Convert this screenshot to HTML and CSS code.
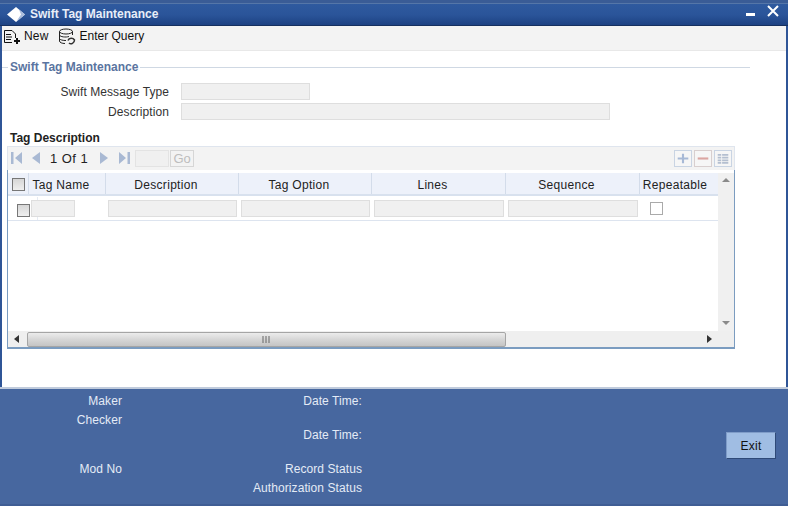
FILE: index.html
```html
<!DOCTYPE html>
<html lang="en">
<head>
<meta charset="utf-8">
<title>Swift Tag Maintenance</title>
<link rel="stylesheet" href="styles.css">
</head>
<body>
<div class="window">
  <header class="titlebar">
    <svg class="logo" width="18" height="15" viewBox="0 0 18 15"><path d="M9 0 L18 7.500 L9 15 L0 7.500 Z" fill="#fff"/><path d="M12 2.500 L18 7.500 L9 15 L14 7.500 Z" fill="#a9bcdc"/></svg>
    <span class="title">Swift Tag Maintenance</span>
    <span class="winbtns">
      <svg width="10" height="5" viewBox="0 0 10 5"><rect y="1" width="9" height="3" fill="#fff"/></svg>
      <svg class="closebtn" width="12" height="12" viewBox="0 0 12 12"><path d="M1 1 L11 11 M11 1 L1 11" stroke="#fff" stroke-width="2"/></svg>
    </span>
  </header>
  <nav class="toolbar">
    <span class="tool">
      <svg width="18" height="17" viewBox="0 0 18 17" fill="none" stroke="#111"><path d="M1.500 14.500V2.500H9L12.500 6V10M1.500 14.500H9"/><path d="M3 6.500H8M3 9H9M3 11.500H8"/><path d="M14 10V16M11 13H17" stroke-width="2"/></svg>
      New
    </span>
    <span class="tool tool-query">
      <svg width="18" height="18" viewBox="0 0 18 18" fill="none" stroke="#222"><ellipse cx="8" cy="3.500" rx="6.500" ry="2.500"/><path d="M1.500 3.500V13C1.500 14.500 4 15.500 7 15.500M14.500 3.500V7M1.500 7C2 9 8 9.500 11 8.500M1.500 10.500C2 12 5 12.500 8 12.500"/><path d="M10 12.500C11 9.500 15 9.500 16.500 12C16.500 15 13 17 11 15" stroke="#333" stroke-width="1.500"/></svg>
      Enter Query
    </span>
  </nav>
  <main class="form">
    <div class="legend"><span class="legend-text">Swift Tag Maintenance</span></div>
    <div class="field">
      <label class="field-label">Swift Message Type</label>
      <span class="input input-short"></span>
    </div>
    <div class="field">
      <label class="field-label">Description</label>
      <span class="input input-long"></span>
    </div>
    <h2 class="section">Tag Description</h2>
    <div class="pager">
      <svg class="pg first" width="11" height="12" viewBox="0 0 11 12"><path d="M0 0H2.500V12H0Z M11 0V12L4 6Z" fill="#a9b9d3"/></svg>
      <svg class="pg prev" width="8" height="12" viewBox="0 0 8 12"><path d="M8 0V12L0 6Z" fill="#a9b9d3"/></svg>
      <span class="pg-text">1 Of 1</span>
      <svg class="pg next" width="8" height="12" viewBox="0 0 8 12"><path d="M0 0V12L8 6Z" fill="#a9b9d3"/></svg>
      <svg class="pg last" width="11" height="12" viewBox="0 0 11 12"><path d="M11 0H8.500V12H11Z M0 0V12L7 6Z" fill="#a9b9d3"/></svg>
      <span class="pg-input"></span>
      <span class="pg-go">Go</span>
      <span class="pg-actions">
        <svg class="act act-add" width="18" height="17" viewBox="0 0 18 17"><path d="M9 3V14M3 8.500H15" stroke="#a7b9d6" stroke-width="2.400"/></svg>
        <svg class="act act-del" width="18" height="17" viewBox="0 0 18 17"><path d="M3 8.500H15" stroke="#dba6a2" stroke-width="2.400"/></svg>
        <svg class="act act-list" width="18" height="17" viewBox="0 0 18 17"><path d="M3 4.500H7M8 4.500H15M3 7.500H7M8 7.500H15M3 10.500H7M8 10.500H15M3 13.500H7M8 13.500H15" stroke="#b4bfd0" stroke-width="2"/></svg>
      </span>
    </div>
    <div class="grid">
      <div class="grid-body">
        <div class="grid-main">
          <div class="grid-head">
            <span class="cell c0"><span class="check check-grey"></span></span>
            <span class="cell c1">Tag Name</span>
            <span class="cell c2">Description</span>
            <span class="cell c3">Tag Option</span>
            <span class="cell c4">Lines</span>
            <span class="cell c5">Sequence</span>
            <span class="cell c6">Repeatable</span>
          </div>
          <div class="grid-row">
            <span class="rcell r0"><span class="check check-grey"></span></span>
            <span class="rcell r1"><span class="input rinput-small"></span></span>
            <span class="rcell c2"><span class="input rinput"></span></span>
            <span class="rcell c3"><span class="input rinput"></span></span>
            <span class="rcell c4"><span class="input rinput"></span></span>
            <span class="rcell c5"><span class="input rinput"></span></span>
            <span class="rcell r6"><span class="check check-white"></span></span>
          </div>
        </div>
        <div class="vscroll">
          <svg width="8" height="4" viewBox="0 0 8 4"><path d="M4 0L8 4H0Z" fill="#8a8a8a"/></svg>
          <svg width="8" height="4" viewBox="0 0 8 4"><path d="M4 4L8 0H0Z" fill="#8a8a8a"/></svg>
        </div>
      </div>
      <div class="hscroll">
        <svg class="arrow" width="5" height="8" viewBox="0 0 5 8"><path d="M0 4L5 0V8Z" fill="#333"/></svg>
        <div class="track">
          <div class="thumb"><svg width="9" height="7" viewBox="0 0 9 7"><path d="M1 0V7M4 0V7M7 0V7" stroke="#666" stroke-width="1"/></svg></div>
        </div>
        <svg class="arrow" width="5" height="8" viewBox="0 0 5 8"><path d="M5 4L0 0V8Z" fill="#333"/></svg>
      </div>
    </div>
  </main>
  <footer class="footer">
    <div class="foot-col foot-left">
      <span class="foot-label">Maker</span>
      <span class="foot-label">Checker</span>
      <span class="foot-label foot-mod">Mod No</span>
    </div>
    <div class="foot-col foot-right">
      <span class="foot-label">Date Time:</span>
      <span class="foot-label foot-dt2">Date Time:</span>
      <span class="foot-label foot-rs">Record Status</span>
      <span class="foot-label">Authorization Status</span>
    </div>
    <button class="exit" type="button">Exit</button>
  </footer>
</div>
</body>
</html>
```
FILE: styles.css
```css
* { box-sizing: border-box; }
html, body { margin: 0; padding: 0; }
body {
  width: 788px;
  height: 506px;
  overflow: hidden;
  font-family: "Liberation Sans", Arial, sans-serif;
  font-size: 12px;
  color: #222;
  background: #fff;
}
.window {
  width: 788px;
  height: 506px;
  display: flex;
  flex-direction: column;
  border-left: 2px solid #2f5597;
  border-right: 2px solid #2f5597;
}
.titlebar {
  height: 26px;
  margin: 0 -2px;
  padding: 0 9px 0 7px;
  flex: none;
  display: flex;
  align-items: center;
  color: #fff;
  background: linear-gradient(#5576a8 0, #5576a8 1px, #2f5a9f 1px, #2a5499 55%, #1d4283 100%);
  border-top: 3px solid #3a5c96;
  border-bottom: 1px solid #16305f;
}
.logo { flex: none; }
.title {
  margin-left: 5px;
  font-weight: bold;
  font-size: 12px;
  color: #e8eef8;
}
.winbtns { margin-left: auto; display: flex; align-items: center; gap: 11px; }
.closebtn { position: relative; top: -3px; }
.toolbar {
  height: 25px;
  flex: none;
  display: flex;
  align-items: flex-start;
  padding: 2px 0 0 1px;
  background: #f3f3f3;
  border-bottom: 1px solid #e8e8e8;
  color: #111;
  line-height: 16px;
}
.tool { display: flex; align-items: flex-start; gap: 3px; letter-spacing: .15px; }
.tool-query { margin-left: 10px; letter-spacing: 0; }
.form { flex: 1; padding: 0; background: #fff; min-height: 0; }
.legend {
  display: flex;
  align-items: center;
  height: 18px;
  margin-top: 7px;
  width: 748px;
}
.legend::before { content: ""; width: 6px; height: 1px; background: #cfd8e3; }
.legend::after { content: ""; flex: 1; height: 1px; background: #cfd8e3; }
.legend-text { padding: 0 2px; font-weight: bold; color: #5a74a0; }
.field { display: flex; align-items: center; height: 20px; }
.legend + .field { margin-top: 6px; }
.field-label { width: 167px; text-align: right; color: #333; letter-spacing: .08px; }
.input { display: block; height: 17px; background: #f0f0f0; border: 1px solid #dedede; }
.input-short { width: 129px; margin: 0 0 2px 12px; }
.input-long { width: 429px; margin: 0 0 2px 12px; }
.section {
  margin: 9px 0 0 8px;
  font-size: 12px;
  line-height: 15px;
  font-weight: bold;
  color: #222;
}
.pager {
  width: 728px;
  height: 24px;
  margin: 0 0 0 5px;
  display: flex;
  align-items: center;
  background: #f3f3f3;
  border: 1px solid #dfe5ee;
  border-bottom: 0;
  padding: 0 2px 1px 3px;
}
.pg { flex: none; }
.prev { margin-left: 10px; }
.pg-text { margin-left: 10px; color: #222; font-size: 13px; letter-spacing: .45px; }
.next { margin-left: 12px; }
.last { margin-left: 11px; }
.pg-input { width: 34px; height: 17px; margin-left: 5px; background: #f0f0f0; border: 1px solid #e3e3e3; }
.pg-go {
  width: 24px;
  height: 17px;
  margin-left: 1px;
  border: 1px solid #d6d6d6;
  color: #bdbdbd;
  text-align: center;
  font-size: 13px;
  line-height: 15px;
}
.pg-actions { margin-left: auto; display: flex; gap: 2px; }
.act { display: block; border: 1px solid #c9d4e3; background: #f6f6f6; }
.act-del { border-color: #d8cfcf; }
.grid {
  width: 728px;
  margin-left: 5px;
  border-left: 1px solid #7b9cc0;
  border-right: 1px solid #7b9cc0;
  border-bottom: 2px solid #7b9cc0;
  height: 179px;
  display: flex;
  flex-direction: column;
}
.grid-body { flex: 1; display: flex; min-height: 0; }
.grid-main { width: 710px; flex: none; padding-top: 3px; }
.grid-head {
  display: flex;
  height: 23px;
  background: #edf1fa;
  border-bottom: 2px solid #d8e1ee;
}
.grid-row {
  display: flex;
  height: 25px;
  padding-top: 1px;
  border-bottom: 1px solid #dde4ef;
}
.cell, .rcell { display: flex; align-items: center; justify-content: center; flex: none; }
.cell { color: #222; border-right: 1px solid #d3dcea; letter-spacing: .3px; padding: 2px 12px 0 0; }
.cell.c0 { width: 21px; padding-right: 0; }
.c1 { width: 77px; }
.c2 { width: 133px; }
.c3 { width: 133px; }
.c4 { width: 134px; }
.c5 { width: 134px; }
.cell.c6 { width: 78px; border-right: 0; padding-right: 8px; }
.rcell { padding: 0 2px; }
.r0 {
  width: 30px;
  justify-content: flex-start;
  padding: 0 0 0 9px;
  border-right: 1px solid #e6ebf3;
}
.r0 .check { position: relative; top: 2px; }
.r1 { width: 68px; justify-content: flex-start; padding: 0; }
.r6 { width: 78px; justify-content: flex-start; padding: 0 0 0 10px; }
.check { display: block; flex: none; width: 13px; height: 13px; }
.check-grey { background: linear-gradient(#d6d6d6, #efefef); border: 1px solid #777; }
.check-white { background: #fff; border: 1px solid #aaa; }
.input.rinput-small { width: 44px; margin-left: -7px; position: relative; }
.input.rinput { width: 100%; }
.vscroll {
  width: 16px;
  flex: none;
  margin-top: 3px;
  background: #f0f0f0;
  display: flex;
  flex-direction: column;
  align-items: center;
  justify-content: space-between;
  padding: 5px 0 6px;
}
.hscroll {
  height: 16px;
  flex: none;
  display: flex;
  align-items: center;
  background: #efefef;
  padding: 0 22px 0 6px;
}
.track { flex: 1; height: 15px; margin: 0 4px 0 4px; }
.thumb {
  width: 479px;
  height: 15px;
  margin-left: 4px;
  display: flex;
  align-items: center;
  justify-content: center;
  border: 1px solid #a5a5a5;
  border-radius: 2px;
  background: linear-gradient(#ececec, #d6d6d6 50%, #c4c4c4);
}
.footer {
  height: 119px;
  margin: 0 -2px;
  flex: none;
  display: flex;
  align-items: flex-start;
  background: #47679f;
  border-top: 2px solid #c0cbdc;
  border-bottom: 2px solid #3f5d94;
  color: #fff;
}
.foot-col { display: flex; flex-direction: column; align-items: flex-end; flex: none; }
.foot-left { width: 122px; padding-top: 4px; }
.foot-right { width: 240px; padding-top: 4px; }
.foot-label { display: block; height: 19px; line-height: 17px; color: #e4ebf6; letter-spacing: .08px; }
.foot-mod { margin-top: 30px; }
.foot-dt2 { margin-top: 15px; }
.foot-rs { margin-top: 15px; }
.exit {
  margin: 43px 0 0 364px;
  width: 50px;
  height: 27px;
  padding: 0;
  font: 12px "Liberation Sans", Arial, sans-serif;
  letter-spacing: .3px;
  color: #111;
  background: #a0bde3;
  border: 1px solid #7f9cc8;
  border-right-color: #2f4a78;
  border-bottom-color: #2f4a78;
}
```
